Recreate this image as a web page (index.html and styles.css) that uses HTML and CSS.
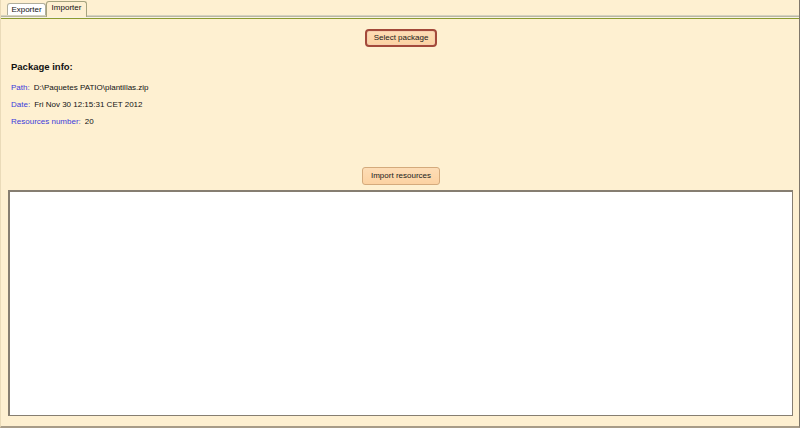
FILE: index.html
```html
<!DOCTYPE html>
<html>
<head>
<meta charset="utf-8">
<link rel="stylesheet" href="styles.css">
</head>
<body>
<div class="page">
  <div class="tabs">
    <div class="tab">Exporter</div>
    <div class="tab active">Importer</div>
  </div>
  <div class="bar top-bar"><button class="btn primary">Select package</button></div>
  <div class="info">
    <div class="info-title">Package info:</div>
    <div class="row"><span class="lbl">Path:</span><span class="val">D:\Paquetes PATIO\plantillas.zip</span></div>
    <div class="row"><span class="lbl">Date:</span><span class="val">Fri Nov 30 12:15:31 CET 2012</span></div>
    <div class="row"><span class="lbl">Resources number:</span><span class="val">20</span></div>
  </div>
  <div class="bar import-bar"><button class="btn">Import resources</button></div>
  <div class="log"></div>
</div>
</body>
</html>
```
FILE: styles.css
```css
html, body {
  margin: 0;
  padding: 0;
  background: #fef0d1;
}
.page {
  width: 800px;
  height: 428px;
  box-sizing: border-box;
  background: #fef0d1;
  border-left: 1px solid #eadbb9;
  border-right: 1px solid #7f776b;
  border-bottom: 2px solid #a89c88;
  font-family: "Liberation Sans", Arial, sans-serif;
  font-size: 8px;
  color: #111;
  display: flex;
  flex-direction: column;
}
.tabs {
  height: 15px;
  display: flex;
  align-items: flex-end;
  padding-left: 6px;
  margin-bottom: 4px;
  box-shadow: 0 1px 0 #d6d3bf, 0 2px 0 #b9b6a2, 0 3px 0 #f6f3e6, 0 4px 0 #8d9b2f;
}
.tab {
  box-sizing: border-box;
  height: 12px;
  width: 39px;
  border: 1px solid #b0ae9c;
  border-bottom: none;
  border-radius: 3px 3px 0 0;
  background: #ffffff;
  color: #111;
  display: flex;
  align-items: center;
  justify-content: center;
  padding-top: 1px;
  line-height: 10px;
}
.tab.active {
  height: 16px;
  width: 41px;
  margin-bottom: -2px;
  background: #fef0d1;
  border-color: #a6a37f;
  padding-top: 0;
  padding-bottom: 4px;
}
.bar {
  display: flex;
  justify-content: center;
}
.top-bar {
  margin-top: 10px;
}
.btn {
  font-family: "Liberation Sans", Arial, sans-serif;
  font-size: 8px;
  color: #1a1a1a;
  height: 18px;
  box-sizing: border-box;
  margin: 0;
  padding: 0 8px;
  line-height: 14px;
  border-radius: 3px;
  border: 1px solid #d4aa7c;
  background: linear-gradient(#fdddb6, #fcd2a2);
}
.btn.primary {
  border: 2px solid #a3493a;
  border-radius: 4px;
  padding: 0 7px;
  margin-left: 2px;
  box-shadow: inset 0 0 0 1px #f5cfae;
}
.import-bar {
  margin-top: 37px;
  margin-left: 2px;
}
.info {
  padding-left: 10px;
  margin-top: 14px;
}
.info-title {
  font-size: 9.5px;
  font-weight: bold;
  line-height: 12px;
  margin-bottom: 6px;
}
.row {
  height: 17px;
  line-height: 17px;
  display: flex;
}
.lbl {
  color: #3b3bdb;
  margin-right: 4px;
}
.log {
  margin: 5px 6px 0 7px;
  height: 226px;
  box-sizing: border-box;
  background: #ffffff;
  border: 2px solid #867e71;
  border-right-width: 1px;
  border-bottom-width: 1px;
}
```
